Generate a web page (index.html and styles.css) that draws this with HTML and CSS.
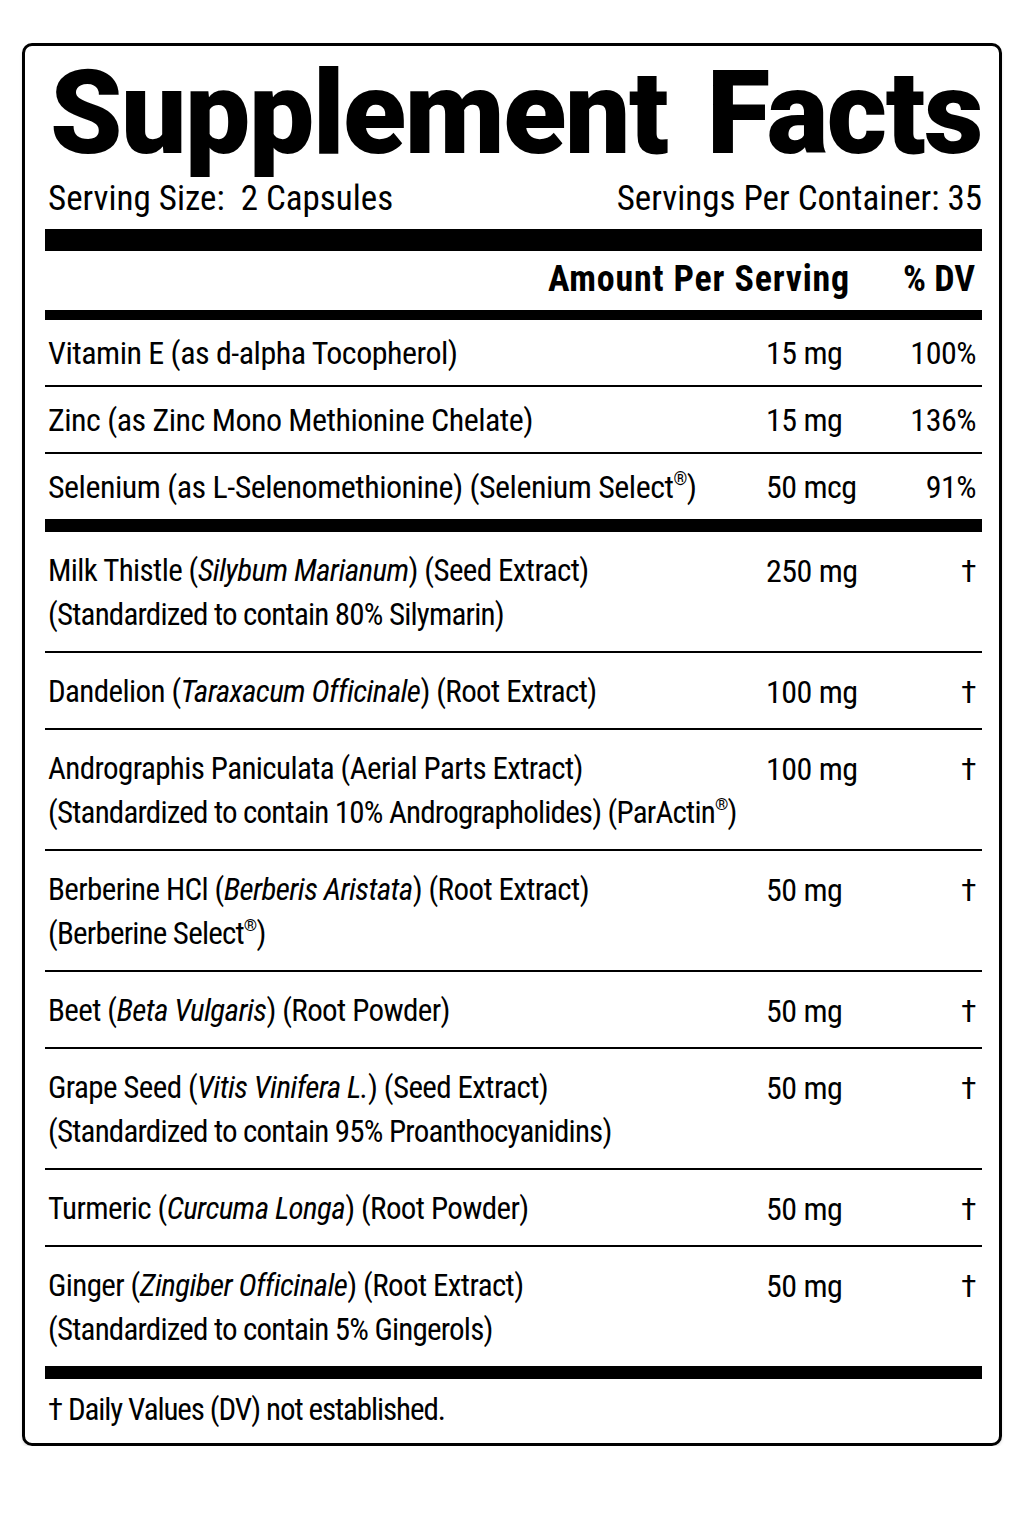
FILE: index.html
```html
<!DOCTYPE html>
<html lang="en">
<head>
<meta charset="utf-8">
<title>Supplement Facts</title>
<link rel="stylesheet" href="styles.css">
</head>
<body>
<div class="label">
  <h1 class="title">Supplement Facts</h1>
  <div class="serving">
    <span>Serving Size:&nbsp; 2 Capsules</span>
    <span>Servings Per Container: 35</span>
  </div>
  <div class="bar bar-xl"></div>
  <div class="head">
    <span class="h-amt">Amount Per Serving</span>
    <span class="h-dv">% DV</span>
  </div>
  <div class="bar bar-md"></div>
  <div class="rows rows-vit">
    <div class="row">
      <div class="name">Vitamin E (as d-alpha Tocopherol)</div>
      <div class="amt">15 mg</div>
      <div class="dv">100%</div>
    </div>
    <div class="row">
      <div class="name">Zinc (as Zinc Mono Methionine Chelate)</div>
      <div class="amt">15 mg</div>
      <div class="dv">136%</div>
    </div>
    <div class="row">
      <div class="name">Selenium (as L-Selenomethionine) (Selenium Select<sup class="reg">®</sup>)</div>
      <div class="amt">50 mcg</div>
      <div class="dv">91%</div>
    </div>
  </div>
  <div class="bar bar-lg"></div>
  <div class="rows rows-bot">
    <div class="row">
      <div class="name">Milk Thistle (<i>Silybum Marianum</i>) (Seed Extract)<span class="sub">(Standardized to contain 80% Silymarin)</span></div>
      <div class="amt">250 mg</div>
      <div class="dv">†</div>
    </div>
    <div class="row">
      <div class="name">Dandelion (<i>Taraxacum Officinale</i>) (Root Extract)</div>
      <div class="amt">100 mg</div>
      <div class="dv">†</div>
    </div>
    <div class="row">
      <div class="name">Andrographis Paniculata (Aerial Parts Extract)<span class="sub">(Standardized to contain 10% Andrographolides) (ParActin<sup class="reg">®</sup>)</span></div>
      <div class="amt">100 mg</div>
      <div class="dv">†</div>
    </div>
    <div class="row">
      <div class="name">Berberine HCl (<i>Berberis Aristata</i>) (Root Extract)<span class="sub">(Berberine Select<sup class="reg">®</sup>)</span></div>
      <div class="amt">50 mg</div>
      <div class="dv">†</div>
    </div>
    <div class="row">
      <div class="name">Beet (<i>Beta Vulgaris</i>) (Root Powder)</div>
      <div class="amt">50 mg</div>
      <div class="dv">†</div>
    </div>
    <div class="row">
      <div class="name">Grape Seed (<i>Vitis Vinifera L.</i>) (Seed Extract)<span class="sub">(Standardized to contain 95% Proanthocyanidins)</span></div>
      <div class="amt">50 mg</div>
      <div class="dv">†</div>
    </div>
    <div class="row">
      <div class="name">Turmeric (<i>Curcuma Longa</i>) (Root Powder)</div>
      <div class="amt">50 mg</div>
      <div class="dv">†</div>
    </div>
    <div class="row">
      <div class="name">Ginger (<i>Zingiber Officinale</i>) (Root Extract)<span class="sub">(Standardized to contain 5% Gingerols)</span></div>
      <div class="amt">50 mg</div>
      <div class="dv">†</div>
    </div>
  </div>
  <div class="bar bar-lg"></div>
  <p class="foot">† Daily Values (DV) not established.</p>
</div>
</body>
</html>
```
FILE: styles.css
```css
html, body {
  margin: 0;
  padding: 0;
  background: #ffffff;
  color: #000000;
}

body {
  font-family: "Roboto Condensed", "Liberation Sans", Arial, sans-serif;
}

.label {
  box-sizing: border-box;
  width: 980px;
  margin: 43px 0 0 22px;
  padding: 0 17px 0 20px;
  border: 3px solid #000;
  border-radius: 10px;
  box-shadow: 0 2px 3px rgba(0, 0, 0, 0.12);
}

.title {
  margin: 9px 0 0 0;
  padding-left: 5px;
  font-family: "Roboto", "Liberation Sans", Arial, sans-serif;
  font-weight: 900;
  font-size: 116px;
  line-height: 116px;
  letter-spacing: -1.5px;
  word-spacing: 12px;
  white-space: nowrap;
}

.serving {
  display: flex;
  justify-content: space-between;
  margin-top: 8px;
  padding: 0 0 0 3px;
  font-size: 35px;
  line-height: 40px;
}

.bar {
  background: #000;
}

.bar-xl {
  height: 22px;
  margin-top: 10px;
}

.bar-md {
  height: 10px;
}

.bar-lg {
  height: 13px;
}

.head {
  display: flex;
  justify-content: flex-end;
  gap: 53px;
  padding: 8px 7px 11px 0;
  font-weight: 700;
  font-size: 36px;
  line-height: 40px;
}

.h-amt {
  letter-spacing: 0.8px;
}

.row {
  display: grid;
  grid-template-columns: minmax(0, 1fr) 116px 100px;
  align-items: start;
  font-size: 32px;
  line-height: 44px;
  letter-spacing: -0.5px;
  white-space: nowrap;
}

.row + .row {
  border-top: 2px solid #000;
}

.rows-vit .row {
  padding: 11px 0 10px 0;
}

.rows-bot .row {
  padding: 17px 0 14px 0;
}

.name {
  padding-left: 3px;
}

.rows-bot .name {
  font-size: 31px;
  letter-spacing: -0.6px;
}

.sub {
  display: block;
  letter-spacing: -0.8px;
}

.amt {
  text-align: left;
}

.dv {
  text-align: right;
  padding-right: 6px;
}

.reg {
  font-size: 0.55em;
  line-height: 0;
  vertical-align: 0.75em;
}

.foot {
  margin: 0;
  padding: 9px 0 11px 3px;
  font-size: 31px;
  line-height: 44px;
  letter-spacing: -1.1px;
}
```
